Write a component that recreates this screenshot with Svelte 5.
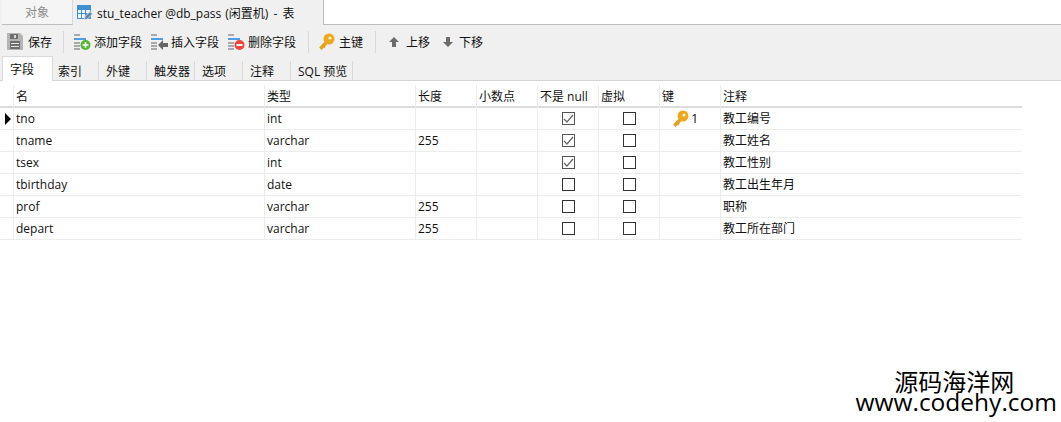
<script>
    const tabs = ["索引", "外键", "触发器", "选项", "注释", "SQL 预览"];
    const rows = [
        { name: "tno", type: "int", len: "", notNull: true, key: "1", note: "教工编号" },
        { name: "tname", type: "varchar", len: "255", notNull: true, note: "教工姓名" },
        { name: "tsex", type: "int", len: "", notNull: true, note: "教工性别" },
        { name: "tbirthday", type: "date", len: "", notNull: false, note: "教工出生年月" },
        { name: "prof", type: "varchar", len: "255", notNull: false, note: "职称" },
        { name: "depart", type: "varchar", len: "255", notNull: false, note: "教工所在部门" },
    ];
</script>

{#snippet key()}
    <svg class="key" width="16" height="17" viewBox="0 0 16 17">
        <path d="M2.500 14.500L8 9" stroke="#e39f1e" stroke-width="3.400" stroke-linecap="square" />
        <path d="M3 11.500l3 3" stroke="#e39f1e" stroke-width="2" />
        <circle cx="10" cy="6" r="5.500" fill="#eca821" />
        <circle cx="11" cy="5" r="1.600" fill="#fdf0c4" />
    </svg>
{/snippet}

{#snippet fieldLines()}
    <rect x="0" y="1" width="6" height="2" fill="#a9a9a9" />
    <rect x="0" y="5" width="12" height="2" fill="#4f9fe0" />
    <rect x="0" y="9" width="6" height="2" fill="#a9a9a9" />
    <rect x="0" y="12" width="6" height="2" fill="#a9a9a9" />
    <rect x="0" y="15" width="6" height="2" fill="#a9a9a9" />
{/snippet}

<div class="window">
    <div class="tabbar">
        <div class="doc-tab objects">对象</div>
        <div class="doc-tab active">
            <svg width="16" height="17" viewBox="0 0 16 17">
                <rect x="0" y="1" width="14" height="14" fill="#3f8fd2" />
                <rect x="1" y="6" width="3" height="3" fill="#eef5fb" />
                <rect x="5" y="6" width="3" height="3" fill="#eef5fb" />
                <rect x="9" y="6" width="4" height="3" fill="#eef5fb" />
                <rect x="1" y="10" width="3" height="4" fill="#eef5fb" />
                <rect x="5" y="10" width="3" height="4" fill="#eef5fb" />
                <path d="M7 16l1-3.500 5-5 2.500 2.500-5 5z" fill="#5f87ad" stroke="#f0f0f0" stroke-width="0.800" />
            </svg>
            <span>stu_teacher @db_pass<span class="tail"> (闲置机) - 表</span></span>
        </div>
        <div class="tabbar-rest"></div>
    </div>

    <div class="toolbar">
        <button class="tool save">
            <svg width="16" height="17" viewBox="0 0 16 17">
                <path d="M0 0h13l3 3v14H0z" fill="#b4b4b4" />
                <rect x="3" y="1" width="8" height="5" fill="#6e6e6e" />
                <rect x="7" y="2" width="2" height="3" fill="#d8d8d8" />
                <rect x="3" y="8" width="10" height="8" fill="#6e6e6e" />
                <rect x="4" y="10" width="8" height="1" fill="#e4e4e4" />
                <rect x="4" y="13" width="8" height="1" fill="#e4e4e4" />
            </svg>
            保存
        </button>
        <span class="sep"></span>
        <div class="group">
            <button class="tool">
                <svg width="17" height="18" viewBox="0 0 17 18">
                    {@render fieldLines()}
                    <circle cx="11.500" cy="12" r="5" fill="#54b435" />
                    <path d="M8.500 12h6M11.500 9v6" stroke="#fff" stroke-width="1.600" />
                </svg>
                添加字段
            </button>
            <button class="tool">
                <svg width="17" height="18" viewBox="0 0 17 18">
                    {@render fieldLines()}
                    <path d="M7 12l5-5v3h5v4h-5v3z" fill="#666" />
                </svg>
                插入字段
            </button>
            <button class="tool">
                <svg width="17" height="18" viewBox="0 0 17 18">
                    {@render fieldLines()}
                    <circle cx="11.500" cy="12" r="5" fill="#e8483f" />
                    <path d="M8.500 12h6" stroke="#fff" stroke-width="2" />
                </svg>
                删除字段
            </button>
        </div>
        <span class="sep"></span>
        <button class="tool primary">
            {@render key()}
            主键
        </button>
        <span class="sep"></span>
        <div class="group moves">
            <button class="tool move">
                <svg width="12" height="12" viewBox="0 0 12 12">
                    <path d="M6 1l5 5H8v5H4V6H1z" fill="#6b6b6b" />
                </svg>
                上移
            </button>
            <button class="tool move down">
                <svg width="12" height="12" viewBox="0 0 12 12">
                    <path d="M6 11L1 6h3V1h4v5h3z" fill="#6b6b6b" />
                </svg>
                下移
            </button>
        </div>
    </div>

    <div class="subtabs">
        <div class="subtab current">字段</div>
        {#each tabs as tab}
            <div class="subtab">{tab}</div>
        {/each}
    </div>

    <div class="grid">
        <div class="row head">
            <div class="marker"></div>
            <div>名</div>
            <div>类型</div>
            <div>长度</div>
            <div>小数点</div>
            <div>不是 null</div>
            <div>虚拟</div>
            <div>键</div>
            <div>注释</div>
        </div>
        {#each rows as row, i}
            <div class="row">
                <div class="marker">
                    {#if i === 0}<span class="arrow"></span>{/if}
                </div>
                <div>{row.name}</div>
                <div>{row.type}</div>
                <div>{row.len}</div>
                <div></div>
                <div class="center">
                    <span class="check" class:on={row.notNull}>
                        {#if row.notNull}
                            <svg width="11" height="11" viewBox="0 0 11 11">
                                <path d="M1 6l3 3 6-7" fill="none" stroke="#666" stroke-width="1.200" />
                            </svg>
                        {/if}
                    </span>
                </div>
                <div class="center"><span class="check"></span></div>
                <div class="keycell">
                    {#if row.key}
                        {@render key()}
                        <span>{row.key}</span>
                    {/if}
                </div>
                <div>{row.note}</div>
            </div>
        {/each}
    </div>

    <div class="watermark">
        <div class="wm-cn">源码海洋网</div>
        <div class="wm-url">www.codehy.com</div>
    </div>
</div>

<style>
    :global(body) {
        background: #fff;
    }

    .window {
        position: relative;
        width: 1061px;
        height: 422px;
        overflow: hidden;
        font-family: "Open Sans", "Noto Sans CJK SC", sans-serif;
        font-size: 12px;
        color: #111;
        background: #fff;
    }

    .tabbar {
        display: flex;
        height: 25px;
        padding-left: 2px;
        background: #f0f0f0;
        box-sizing: border-box;
    }

    .doc-tab {
        display: flex;
        align-items: center;
        box-sizing: border-box;
        height: 25px;
    }

    .objects {
        width: 71px;
        justify-content: center;
        background: #f5f5f5;
        color: #8c8c8c;
        border-right: 1px solid #d9d9d9;
        border-bottom: 1px solid #bdbdbd;
    }

    .active {
        width: 250px;
        gap: 4px;
        padding-left: 4px;
        background: #f0f0f0;
    }

    .tail {
        margin-left: 4px;
        word-spacing: 2px;
    }

    .tabbar-rest {
        flex: 1;
        background: #fff;
        border-left: 1px solid #bdbdbd;
        border-bottom: 1px solid #bdbdbd;
    }

    .toolbar {
        display: flex;
        align-items: center;
        box-sizing: border-box;
        height: 31px;
        padding: 2px 0 0 7px;
        background: #f0f0f0;
    }

    .group {
        display: flex;
        gap: 9px;
    }

    .moves {
        gap: 12px;
        margin-left: 2px;
    }

    .tool {
        display: flex;
        align-items: center;
        gap: 3px;
        height: 24px;
        padding: 0;
        border: 0;
        background: none;
        font: inherit;
        color: inherit;
    }

    .tool.save {
        gap: 5px;
        margin-right: -1px;
    }

    .tool.primary {
        gap: 4px;
    }

    .tool.move {
        gap: 6px;
    }

    .tool.move.down {
        gap: 5px;
    }

    .sep {
        width: 1px;
        height: 22px;
        margin: 0 10px 0 12px;
        background: #d9d9d9;
    }

    .subtabs {
        display: flex;
        align-items: flex-end;
        box-sizing: border-box;
        height: 25px;
        padding-left: 2px;
        background: #f0f0f0;
        border-bottom: 1px solid #d4d4d4;
    }

    .subtab {
        display: flex;
        align-items: center;
        box-sizing: border-box;
        width: 48px;
        height: 19px;
        padding-left: 7px;
        border-right: 1px solid #d9d9d9;
    }

    .subtab:nth-child(2) {
        width: 46px;
        padding-left: 5px;
    }

    .subtab:last-child {
        width: 62px;
    }

    .subtab.current {
        position: relative;
        width: 51px;
        height: 25px;
        margin-bottom: -1px;
        padding-left: 7px;
        background: #fff;
        border: 1px solid #d9d9d9;
        border-bottom: 0;
    }

    .grid {
        padding-top: 4px;
    }

    .row {
        display: grid;
        grid-template-columns: 13px 251px 151px 61px 61px 61px 61px 61px 301px;
        width: 1022px;
        height: 22px;
        box-sizing: border-box;
        border-bottom: 1px solid #ececec;
        line-height: 21px;
    }

    .row.head {
        height: 23px;
        border-bottom: 2px solid #dcdcdc;
        line-height: 22px;
    }

    .head > div {
        padding-top: 1px;
    }

    .row > div {
        box-sizing: border-box;
        padding-left: 2px;
        border-left: 1px solid #ececec;
        white-space: nowrap;
        min-width: 0;
    }

    .row > .marker {
        position: relative;
        padding: 0;
        border-left: 0;
    }

    .arrow {
        position: absolute;
        left: 5px;
        top: 5px;
        border-left: 6px solid #000;
        border-top: 6px solid transparent;
        border-bottom: 6px solid transparent;
    }

    .row > .center {
        display: flex;
        align-items: center;
        justify-content: center;
        padding: 0;
    }

    .check {
        display: flex;
        align-items: center;
        justify-content: center;
        box-sizing: border-box;
        width: 13px;
        height: 13px;
        border: 1px solid #333;
    }

    .check.on {
        border-color: #555;
    }

    .row > .keycell {
        display: flex;
        align-items: center;
        gap: 2px;
        padding-left: 13px;
        font-size: 13px;
    }

    .watermark {
        position: absolute;
        right: 4px;
        bottom: 8px;
        text-align: center;
        color: #000;
    }

    .wm-cn {
        height: 23px;
        line-height: 28px;
        font-size: 24px;
        font-family: "Noto Sans CJK SC", sans-serif;
        padding-right: 4px;
    }

    .wm-url {
        height: 24px;
        line-height: 24px;
        font-size: 24.5px;
        font-family: "Open Sans", sans-serif;
    }
</style>
